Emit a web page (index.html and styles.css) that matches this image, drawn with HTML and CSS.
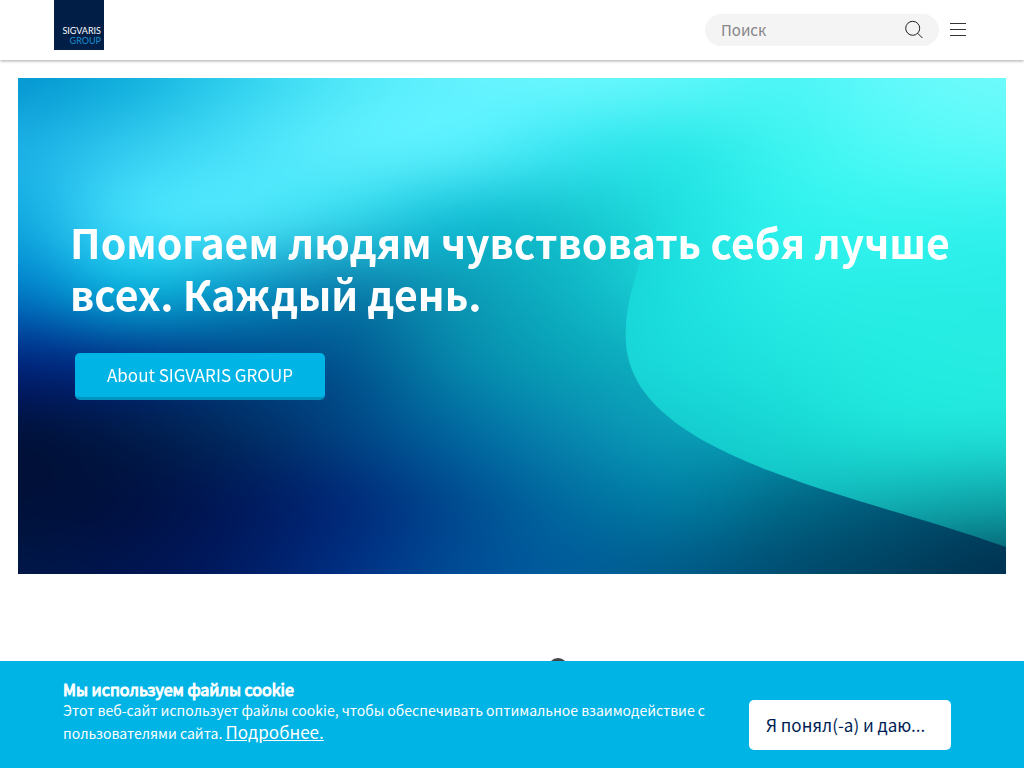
FILE: index.html
```html
<!DOCTYPE html>
<html lang="ru">
<head>
<meta charset="utf-8">
<meta name="viewport" content="width=device-width, initial-scale=1">
<title>SIGVARIS GROUP</title>
<link rel="stylesheet" href="styles.css">
</head>
<body>
<header class="header">
  <a class="logo" href="#" aria-label="SIGVARIS GROUP">
    <span class="logo-name">SIGVARIS</span>
    <span class="logo-group">GROUP</span>
  </a>
  <div class="tools">
    <form class="search" role="search">
      <input class="search-input" type="search" placeholder="Поиск" aria-label="Поиск">
      <button class="icon-button" type="button" aria-label="Найти">
        <svg width="20" height="20" viewBox="0 0 20 20" fill="none" stroke="#222" stroke-width="1"><circle cx="8.7" cy="8.3" r="7"/><path d="M13.6 13.2L18.4 18"/></svg>
      </button>
    </form>
    <button class="icon-button" type="button" aria-label="Меню">
      <svg width="16" height="16" viewBox="0 0 16 16" stroke="#333" stroke-width="1.2"><path d="M0 1.5H16M0 7.5H16M0 13.5H16"/></svg>
    </button>
  </div>
</header>
<main>
  <section class="hero">
    <canvas class="hero-art" width="988" height="496" aria-hidden="true"></canvas>
    <div class="hero-content">
      <h1 class="hero-title">Помогаем людям чувствовать себя лучше всех. Каждый день.</h1>
      <a class="hero-link" href="#">About SIGVARIS GROUP</a>
    </div>
  </section>
  <div class="next"><span class="next-dot"></span></div>
</main>
<aside class="cookie" aria-label="Cookie">
  <div class="cookie-copy">
    <h2 class="cookie-title">Мы используем файлы cookie</h2>
    <p class="cookie-text">Этот веб-сайт использует файлы cookie, чтобы обеспечивать оптимальное взаимодействие с пользователями сайта. <a class="cookie-more" href="#">Подробнее.</a></p>
  </div>
  <button class="cookie-accept" type="button">Я понял(-а) и даю...</button>
</aside>
<script src="hero.js"></script>
</body>
</html>
```
FILE: styles.css
```css
* { box-sizing: border-box; }
body {
  margin: 0;
  background: #fff;
  color: #001e46;
  font-family: "Source Sans Pro", "Noto Sans CJK SC", "Noto Sans", sans-serif;
}
.header {
  display: flex;
  justify-content: space-between;
  align-items: flex-start;
  height: 60px;
  padding: 0 58px 0 54px;
  box-shadow: 0 1px 3px rgba(0, 0, 0, .35);
}
.logo {
  display: flex;
  flex-direction: column;
  justify-content: flex-end;
  align-items: flex-end;
  width: 50px;
  height: 50px;
  padding: 0 3px 4px 0;
  background: #001e46;
  font: 9px/10px Lato, sans-serif;
  text-decoration: none;
}
.logo-name { color: #fff; }
.logo-group { color: #1b8fd0; }
.tools {
  display: flex;
  align-items: center;
  gap: 11px;
  height: 60px;
}
.search {
  display: flex;
  align-items: center;
  width: 234px;
  height: 32px;
  padding: 0 15px 0 16px;
  border-radius: 16px;
  background: #f4f4f4;
}
.search-input {
  flex: 1;
  min-width: 0;
  padding: 0;
  border: 0;
  outline: 0;
  background: none;
  color: #333;
  font: 15px/24px "Noto Sans CJK SC", sans-serif;
}
.search-input::placeholder { color: #858585; }
.icon-button {
  display: flex;
  padding: 0;
  border: 0;
  background: none;
}
.hero {
  position: relative;
  display: flex;
  align-items: center;
  min-height: 496px;
  margin: 18px 18px 0;
  padding: 0 48px 0 52px;
  background: #008eb0;
}
.hero-art {
  position: absolute;
  inset: 0;
  width: 100%;
  height: 100%;
}
.hero-content { position: relative; padding-bottom: 38px; }
.hero-title {
  margin: 0 0 34px;
  color: #fff;
  font-size: 41px;
  font-weight: 700;
  line-height: 52px;
}
.hero-link {
  display: inline-block;
  margin-left: 5px;
  padding: 10px 32px 11px;
  border-bottom: 3px solid #0093bd;
  border-radius: 5px;
  background: #00b4e6;
  color: #fff;
  font-size: 17px;
  line-height: 23px;
  text-decoration: none;
}
.next {
  display: flex;
  justify-content: center;
  padding: 84px 0 110px 92px;
}
.next-dot {
  width: 20px;
  height: 20px;
  border-radius: 50%;
  background: #444;
}
.cookie {
  position: fixed;
  inset: auto 0 0;
  display: flex;
  align-items: flex-start;
  justify-content: space-between;
  gap: 40px;
  min-height: 107px;
  padding: 17px 73px 18px 63px;
  background: #00b4e6;
  color: #fff;
}
.cookie-copy { flex: 1; max-width: 646px; }
.cookie-title {
  margin: 0;
  font-size: 16px;
  font-weight: 400;
  line-height: 22px;
  -webkit-text-stroke: 1px;
}
.cookie-text {
  margin: 0;
  font-size: 14px;
  line-height: 21px;
}
.cookie-more { color: inherit; font-size: 17px; }
.cookie-accept {
  width: 202px;
  height: 50px;
  margin-top: 22px;
  padding: 0 17px;
  overflow: hidden;
  border: 0;
  border-radius: 5px;
  background: #fff;
  color: #001e55;
  font: 17px/24px "Noto Sans CJK SC", sans-serif;
  text-align: left;
  text-overflow: ellipsis;
  white-space: nowrap;
}
```
FILE: hero.js
```javascript
// Colour meshes: evenly spaced columns, rows from top to bottom.
const base = [
  "0496d0 10aedc 30d0ee 50e8f8 64f2ff 6cf8ff 60f8fc 4cf5f6 64f9fc 70fafc",
  "1cb0e6 34ccf0 4ae2fa 60f0ff 5cf2ff 38e6f2 28e6e6 3cf4f0 50faf6 58faf8",
  "10a8e0 48e4fe 50e8fc 34d8ec 10bcd4 14c2cc 20e0e0 30f2ee 34f4ee 34f2ee",
  "007ac8 08b8e0 0898c8 0878a8 0c98b4 0eb4c4 1cd4d8 28ece6 28eee6 28ece6",
  "002480 003088 004488 005490 0688ac 08a4b8 10b0c0 10b0c0 10b0c0 10b0c0",
  "001038 001a48 002c60 004484 0068a0 0888b0 0aa0b8 0898b0 088098 007090",
  "001038 001040 00185a 002878 004a90 006ca0 007ea4 006a88 005878 004a68",
  "001848 001450 001c64 003084 004c96 005c9c 005a88 004c70 003f5e 003050"
];
const wave = [
  "0496d0 10aedc 30d0ee 50e8f8 64f2ff 6cf8ff 60f8fc 4cf5f6 64f9fc 70fafc",
  "1cb0e6 34ccf0 4ae2fa 60f0ff 5cf2ff 38e6f2 28e6e6 3cf4f0 50faf6 58faf8",
  "10a8e0 48e4fe 50e8fc 34d8ec 10bcd4 14c2cc 20e0e0 30f2ee 34f4ee 34f2ee",
  "007ac8 08b8e0 0898c8 0878a8 0c98b4 14ccd0 1ce0e0 28ece6 28eee6 28ece6",
  "18cccc 18cccc 18cccc 18cccc 18cccc 18d0d4 1adcdc 20e4de 24ece2 26ece0",
  "14c4cc 14c4cc 14c4cc 14c4cc 14c4cc 14c4cc 14cccf 18d8d4 1ee4da 20e4da",
  "10b8c0 10b8c0 10b8c0 10b8c0 10b8c0 10b8c0 10c0c4 12bcc0 10b0b4 0ea4a8",
  "088090 088090 088090 088090 088090 088090 088090 088090 066878 045064"
];

// Half Catmull-Rom, half B-spline: keeps the blend free of bands between mesh points.
function spline(a, b, c, d, t) {
  const catmull = b + 0.5 * t * (c - a + t * (2 * a - 5 * b + 4 * c - d + t * (3 * (b - c) + d - a)));
  const s = 1 - t;
  const smooth = (a * s * s * s + b * (3 * t * t * t - 6 * t * t + 4) + c * (3 * s * s * s - 6 * s * s + 4) + d * t * t * t) / 6;
  return (catmull + smooth) / 2;
}

function paintMesh(rows) {
  const mesh = rows.map(r => r.split(" ").map(h => [0, 2, 4].map(i => parseInt(h.substr(i, 2), 16))));
  const cols = mesh[0].length, n = mesh.length;
  const at = (r, c, k) => mesh[Math.max(0, Math.min(n - 1, r))][Math.max(0, Math.min(cols - 1, c))][k];
  const tile = document.createElement("canvas");
  tile.width = 494;
  tile.height = 248;
  const ctx = tile.getContext("2d");
  const image = ctx.createImageData(tile.width, tile.height);
  let p = 0;
  for (let y = 0; y < tile.height; y++) {
    const v = y / (tile.height - 1) * (n - 1), r = Math.floor(v);
    for (let x = 0; x < tile.width; x++) {
      const u = x / (tile.width - 1) * (cols - 1), c = Math.floor(u);
      for (let k = 0; k < 3; k++) {
        const s = [-1, 0, 1, 2].map(i => spline(at(r + i, c - 1, k), at(r + i, c, k), at(r + i, c + 1, k), at(r + i, c + 2, k), u - c));
        image.data[p++] = spline(s[0], s[1], s[2], s[3], v - r);
      }
      image.data[p++] = 255;
    }
  }
  ctx.putImageData(image, 0, 0);
  return tile;
}

const art = document.querySelector(".hero-art").getContext("2d");
art.drawImage(paintMesh(base), 0, 0, 988, 496);
art.clip(new Path2D("M700 0C690 80 638 130 620 190C609 225 607 245 608 265C612 330 685 368 760 396C835 424 900 438 988 469V0Z"));
art.drawImage(paintMesh(wave), 0, 0, 988, 496);
```
